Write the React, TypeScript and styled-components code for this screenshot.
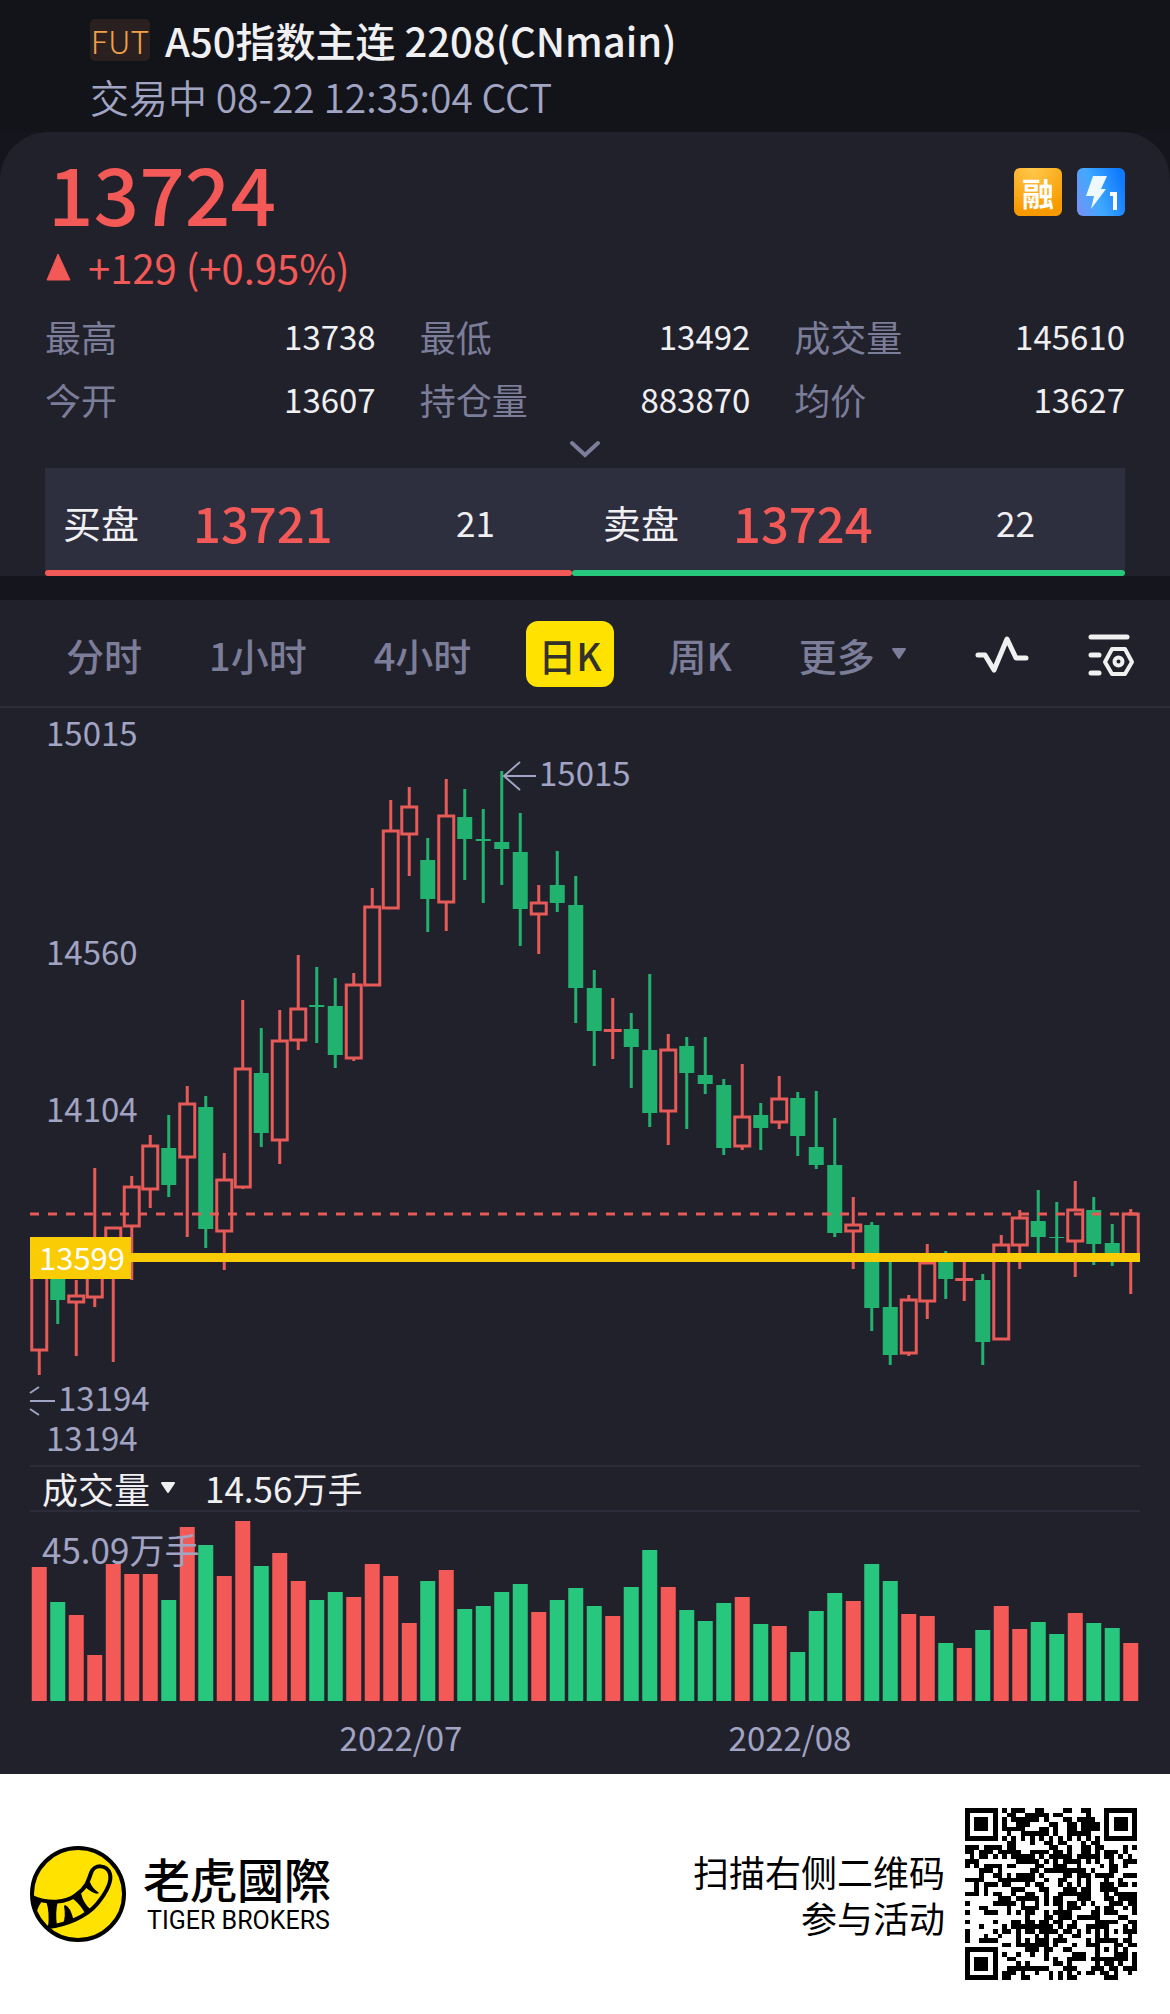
import React from "react";
import styled, { createGlobalStyle } from "styled-components";

const C = {
  page: "#15151e",
  header: "#131419",
  panel: "#21212b",
  quote: "#2d2e3e",
  line: "#2c2d3a",
  red: "#f35956",
  green: "#28c77e",
  candleRed: "#e65a58",
  candleGreen: "#20b26e",
  text: "#f0f0f2",
  muted: "#7c7d99",
  soft: "#a1a4c3",
  yellow: "#ffe200",
  marker: "#f9cc05",
};
const FONT = '"Noto Sans CJK SC", "Noto Sans", sans-serif';

const GlobalStyle = createGlobalStyle`
  * { box-sizing: border-box; }
  body { margin: 0; background: ${C.page}; font-family: ${FONT}; color: ${C.text}; }
  button, select { font: inherit; color: inherit; background: none; border: 0; padding: 0; margin: 0; cursor: pointer; }
  h1, p, dl, dt, dd { margin: 0; font-weight: inherit; }
  svg { display: block; }
`;

const Header = styled.header`
  display: flex;
  flex-direction: column;
  background: ${C.header};
  height: 132px;
  padding: 12px 90px 0;
`;
const TitleRow = styled.div`
  display: flex;
  align-items: center;
  gap: 15px;
  height: 56px;
`;
const Tag = styled.span`
  display: flex;
  align-items: center;
  justify-content: center;
  width: 60px;
  height: 42px;
  border-radius: 5px;
  background: #2a201f;
  color: #f3a04a;
  font-size: 32px;
  font-weight: 300;
`;
const Title = styled.h1`
  font-size: 40px;
  line-height: 56px;
  font-weight: 500;
  white-space: nowrap;
`;
const Status = styled.p`
  font-size: 39px;
  line-height: 56px;
  color: ${C.soft};
  font-weight: 350;
`;

const Summary = styled.section`
  background: ${C.panel};
  border-radius: 48px 48px 0 0;
  padding: 16px 45px 0;
`;
const PriceRow = styled.div`
  display: flex;
  justify-content: space-between;
  align-items: flex-start;
`;
const Price = styled.strong`
  padding-left: 3px;
  font-size: 80px;
  line-height: 86px;
  font-weight: 500;
  color: ${C.red};
`;
const Badges = styled.div`
  display: flex;
  gap: 15px;
  padding-top: 20px;
`;
const Badge = styled.span<{ $bg: string }>`
  display: flex;
  align-items: center;
  justify-content: center;
  width: 48px;
  height: 48px;
  border-radius: 6px;
  background: ${(p) => p.$bg};
  color: #fff;
  font-size: 32px;
  line-height: 44px;
  font-weight: 700;
`;
const Change = styled.p`
  display: flex;
  align-items: center;
  gap: 16px;
  height: 66px;
  font-size: 40px;
  color: ${C.red};
`;
const Stats = styled.dl`
  display: grid;
  grid-template-columns: repeat(3, 1fr);
  column-gap: 44px;
  padding-top: 4px;
`;
const Stat = styled.div`
  display: flex;
  justify-content: space-between;
  align-items: center;
  height: 63px;
  font-size: 33px;
  dt { color: ${C.muted}; font-size: 36px; }
`;
const Expand = styled.button`
  display: flex;
  align-items: center;
  justify-content: center;
  width: 100%;
  height: 38px;
`;
const Quotes = styled.div`
  display: grid;
  grid-template-columns: 1fr 1fr;
  background: ${C.quote};
`;
const Quote = styled.div`
  display: grid;
  grid-template-columns: 130px 263px 1fr;
  align-items: center;
  height: 102px;
  padding: 4px 0 0 18px;
  font-size: 38px;
`;
const QuotePrice = styled.span`
  font-size: 49px;
  font-weight: 500;
  color: ${C.red};
`;
const QuoteSize = styled.span`
  font-size: 35px;
`;
const Balance = styled.div`
  display: flex;
  height: 6px;
  background: ${C.panel};
`;
const BalancePart = styled.span<{ $grow: number; $color: string }>`
  flex: ${(p) => p.$grow} 1 0;
  background: ${(p) => p.$color};
  border-radius: 3px;
`;

const ChartPanel = styled.section`
  margin-top: 24px;
  background: ${C.panel};
`;
const Toolbar = styled.nav`
  display: flex;
  align-items: center;
  height: 108px;
  padding: 2px 35px 0 54px;
  border-bottom: 2px solid ${C.line};
`;
const Tabs = styled.div`
  display: flex;
  align-items: center;
  gap: 43px;
`;
const Tab = styled.button<{ $active?: boolean }>`
  display: flex;
  align-items: center;
  gap: 16px;
  height: 66px;
  padding: 0 12px;
  border-radius: 12px;
  font-size: 38px;
  font-weight: 500;
  white-space: nowrap;
  color: ${(p) => (p.$active ? "#33322a" : C.muted)};
  background: ${(p) => (p.$active ? C.yellow : "transparent")};
`;
const Tools = styled.div`
  display: flex;
  align-items: center;
  gap: 58px;
  margin-left: auto;
  padding-top: 2px;
`;
const Plot = styled.div`
  padding: 0 30px;
  svg { width: 100%; height: auto; overflow: visible; }
`;
const VolumeBar = styled.div`
  display: flex;
  align-items: center;
  height: 47px;
  margin: 0 30px;
  padding: 0 0 2px 12px;
  border-top: 2px solid ${C.line};
  border-bottom: 2px solid ${C.line};
  font-size: 36px;
  line-height: 42px;
`;
const IndicatorLabel = styled.label`
  display: flex;
  align-items: center;
  gap: 9px;
  margin-right: 29px;
`;
const Indicator = styled.select`
  appearance: none;
  height: 42px;
  line-height: 42px;
`;
const VolumeValue = styled.span`
  font-size: 35px;
`;

const Footer = styled.footer`
  display: flex;
  align-items: center;
  height: 240px;
  padding: 0 33px 0 30px;
  background: #fff;
  color: #000;
`;
const BrandName = styled.div`
  display: flex;
  flex-direction: column;
  margin-left: 17px;
`;
const BrandCn = styled.span`
  font-family: "Noto Sans CJK TC", sans-serif;
  font-size: 47px;
  line-height: 54px;
  font-weight: 500;
`;
const BrandEn = styled.span`
  padding-left: 4px;
  font-family: Roboto, sans-serif;
  font-size: 25px;
  line-height: 32px;
`;
const Invite = styled.p`
  margin-left: auto;
  padding-right: 20px;
  font-size: 36px;
  line-height: 46px;
  text-align: right;
`;

/* direction, body top, body bottom, wick top, wick bottom */
type Candle = ["r" | "g", number, number, number, number];
const candles: Candle[] = [
  ["r", 1262, 1351, 1262, 1375], ["g", 1265, 1300, 1262, 1324], ["r", 1295, 1303, 1280, 1356], ["r", 1250, 1298, 1168, 1307],
  ["r", 1227, 1266, 1227, 1362], ["r", 1186, 1227, 1176, 1280], ["r", 1145, 1190, 1135, 1208], ["g", 1148, 1185, 1115, 1197],
  ["r", 1103, 1158, 1086, 1237], ["g", 1107, 1229, 1096, 1248], ["r", 1179, 1232, 1153, 1270], ["r", 1068, 1188, 1000, 1189],
  ["g", 1073, 1133, 1028, 1147], ["r", 1040, 1141, 1010, 1164], ["r", 1008, 1041, 955, 1050], ["g", 1005, 1007, 967, 1043],
  ["g", 1006, 1055, 978, 1068], ["r", 984, 1059, 973, 1061], ["r", 906, 986, 888, 986], ["r", 830, 909, 800, 909],
  ["r", 806, 835, 787, 876], ["g", 860, 899, 838, 932], ["r", 815, 903, 779, 931], ["g", 817, 839, 789, 880],
  ["g", 839, 841, 809, 903], ["g", 842, 849, 771, 885], ["g", 852, 909, 813, 946], ["r", 902, 915, 885, 954],
  ["g", 885, 903, 851, 912], ["g", 905, 988, 876, 1023], ["g", 988, 1031, 970, 1066], ["r", 1029, 1032, 998, 1059],
  ["g", 1029, 1047, 1013, 1088], ["g", 1050, 1113, 974, 1127], ["r", 1049, 1112, 1034, 1145], ["g", 1046, 1073, 1037, 1129],
  ["g", 1075, 1084, 1037, 1094], ["g", 1085, 1148, 1079, 1155], ["r", 1116, 1147, 1064, 1150], ["g", 1115, 1128, 1103, 1150],
  ["r", 1098, 1123, 1076, 1129], ["g", 1098, 1136, 1092, 1156], ["g", 1147, 1165, 1091, 1169], ["g", 1165, 1233, 1118, 1237],
  ["r", 1224, 1232, 1197, 1269], ["g", 1225, 1308, 1222, 1331], ["g", 1307, 1355, 1260, 1365], ["r", 1299, 1354, 1295, 1356],
  ["r", 1262, 1302, 1244, 1319], ["g", 1262, 1279, 1251, 1299], ["r", 1278, 1281, 1260, 1301], ["g", 1280, 1342, 1274, 1365],
  ["r", 1244, 1340, 1235, 1340], ["r", 1217, 1246, 1210, 1269], ["g", 1221, 1237, 1190, 1253], ["g", 1237, 1238, 1202, 1253],
  ["r", 1209, 1242, 1181, 1277], ["g", 1210, 1244, 1197, 1265], ["g", 1243, 1256, 1224, 1266], ["r", 1213, 1258, 1209, 1294],
];
const volumes = [
  134, 99, 86, 46, 137, 127, 127, 101, 174, 156, 125, 180, 135, 148, 120, 101, 109, 104, 137, 125,
  78, 120, 131, 92, 95, 109, 117, 89, 101, 113, 95, 85, 114, 151, 114, 91, 80, 98, 104, 77,
  75, 49, 90, 108, 100, 137, 120, 87, 85, 58, 53, 71, 95, 72, 79, 67, 88, 78, 73, 58,
];
const STEP = 18.5;
const centre = (i: number) => 9.25 + STEP * i;

const axis: [string, number][] = [["15015", 734], ["14560", 953], ["14104", 1110], ["13194", 1439]];

function CandleChart() {
  return (
    <svg viewBox="0 708 1110 757" role="img" aria-label="日K">
      {candles.map(([kind, top, bottom, high, low], i) => {
        const x = centre(i);
        if (kind === "g") {
          return (
            <g key={i} fill={C.candleGreen}>
              <rect x={x - 1.5} y={high} width="3" height={low - high} />
              <rect x={x - 7.5} y={top} width="15" height={bottom - top} />
            </g>
          );
        }
        return (
          <g key={i} fill={C.candleRed}>
            <rect x={x - 1.5} y={high} width="3" height={Math.max(0, top - high)} />
            <rect x={x - 1.5} y={bottom} width="3" height={Math.max(0, low - bottom)} />
            {bottom - top < 5 ? (
              <rect x={x - 9} y={top} width="18" height={bottom - top} />
            ) : (
              <rect x={x - 7.5} y={top + 1} width="15" height={bottom - top - 2} fill="none" stroke={C.candleRed} strokeWidth="3" />
            )}
          </g>
        );
      })}
      <line x1="0" x2="1110" y1="1214" y2="1214" stroke={C.candleRed} strokeWidth="3" strokeDasharray="9 9" />
      <rect x="100" y="1253" width="1010" height="9" fill={C.marker} />
      <rect x="0" y="1237" width="101" height="42" fill={C.marker} />
      <g fontFamily={FONT} fontSize="33" fill={C.soft}>
        {axis.map(([label, y]) => (
          <text key={label} x="16" y={y + 12}>{label}</text>
        ))}
        <text x="9" y="1270" fill="#fff" fontSize="31">13599</text>
        <text x="509" y="786">15015</text>
        <text x="28" y="1411">13194</text>
      </g>
      <g fill="none" stroke={C.soft} strokeWidth="2">
        <path d="M506 776H474M490 762L474 776L490 790" />
        <path d="M25 1401H0M9 1387L0 1393M0 1409L9 1415" />
      </g>
    </svg>
  );
}

function VolumeChart() {
  return (
    <svg viewBox="0 0 1110 262" role="img" aria-label="成交量">
      {volumes.map((v, i) => (
        <rect key={i} x={centre(i) - 7.5} y={189 - v} width="15" height={v} fill={candles[i][0] === "r" ? C.red : C.green} />
      ))}
      <g fontFamily={FONT} fontSize="33" fill={C.soft}>
        <text x="12" y="52" fontSize="35">45.09万手</text>
        <text x="371" y="239" textAnchor="middle">2022/07</text>
        <text x="760" y="239" textAnchor="middle">2022/08</text>
      </g>
    </svg>
  );
}

function TigerLogo() {
  return (
    <svg width="96" height="96" viewBox="0 0 96 96" aria-hidden="true">
      <circle cx="48" cy="48" r="46" fill={C.yellow} stroke="#000" strokeWidth="4" />
      <path d="M2 51C18 58 36 57 46 49C56 42 58 36 61 27C64 18 77 18 80 28C82 36 76 47 67 58C56 71 36 79 18 81" fill="none" stroke="#000" strokeWidth="4" />
      <path d="M2 50L13 54Q9 58 6 68L2 60ZM16 55H28Q25 66 27 80L18 82Q20 66 16 55ZM35 59Q40 60 44 75L33 78Q36 70 34 60ZM42 52L51 47Q53 57 61 64L56 69Q51 59 42 52ZM55 39L60 36Q62 42 69 47Q66 50 55 41Z" fill="#000" />
    </svg>
  );
}

const QR_SIZE = 37;
function isDark(r: number, c: number) {
  const finder = (r0: number, c0: number) => {
    const d = Math.max(Math.abs(r - r0 - 3), Math.abs(c - c0 - 3));
    return d <= 4 ? d === 3 || d <= 1 : null;
  };
  for (const [a, b] of [[0, 0], [0, 30], [30, 0]]) {
    const f = finder(a, b);
    if (f !== null) return f;
  }
  const d = Math.max(Math.abs(r - 30), Math.abs(c - 30));
  if (d <= 2) return d !== 1;
  if (r === 6) return c % 2 === 0;
  if (c === 6) return r % 2 === 0;
  let h = (r * 374761393 + c * 668265263) | 0;
  h = Math.imul(h ^ (h >>> 13), 1274126177);
  h = (h ^ (h >>> 16)) >>> 0;
  return h % 100 < (r > 18 && r < 28 && c < 11 ? 30 : 52);
}
function QrCode() {
  let d = "";
  for (let r = 0; r < QR_SIZE; r++)
    for (let c = 0; c < QR_SIZE; c++) if (isDark(r, c)) d += `M${c} ${r}h1v1h-1z`;
  return (
    <svg width="172" height="172" viewBox="0 0 37 37" shapeRendering="crispEdges" role="img" aria-label="二维码">
      <path d={d} fill="#000" />
    </svg>
  );
}

const stats = [
  ["最高", "13738"], ["最低", "13492"], ["成交量", "145610"],
  ["今开", "13607"], ["持仓量", "883870"], ["均价", "13627"],
];

const Down = ({ color }: { color: string }) => (
  <svg width="16" height="12" viewBox="0 0 16 12" aria-hidden="true">
    <path d="M2 1H14L8 10Z" fill={color} stroke={color} strokeWidth="2" strokeLinejoin="round" />
  </svg>
);

export default function App() {
  return (
    <>
      <GlobalStyle />
      <Header>
        <TitleRow>
          <Tag>FUT</Tag>
          <Title>A50指数主连 2208(CNmain)</Title>
        </TitleRow>
        <Status>交易中 08-22 12:35:04 CCT</Status>
      </Header>
      <main>
        <Summary>
          <PriceRow>
            <Price>13724</Price>
            <Badges>
              <Badge $bg="radial-gradient(circle at 40% 0%, #ffc94d, #f79a00 80%)">融</Badge>
              <Badge $bg="linear-gradient(70deg, #7b8ff5 0%, #3fa9ff 40%, #0f79ff 90%)">
                <svg width="48" height="48" viewBox="0 0 48 48" role="img" aria-label="L1">
                  <path d="M16 8H30L24 21H29L14 41L17 28H9Z" fill="#eef8ff" />
                  <path d="M33 26H38V42" fill="none" stroke="#fff" strokeWidth="4" />
                </svg>
              </Badge>
            </Badges>
          </PriceRow>
          <Change>
            <svg width="27" height="28" viewBox="0 0 27 28" aria-hidden="true">
              <path d="M13 1L25 27H2Z" fill={C.red} stroke={C.red} strokeLinejoin="round" />
            </svg>
            +129 (+0.95%)
          </Change>
          <Stats>
            {stats.map(([k, v]) => (
              <Stat key={k}><dt>{k}</dt><dd>{v}</dd></Stat>
            ))}
          </Stats>
          <Expand aria-label="展开">
            <svg width="30" height="18" viewBox="0 0 30 18" fill="none" stroke={C.muted} strokeWidth="4" strokeLinecap="round">
              <path d="M2 3L15 15L28 3" />
            </svg>
          </Expand>
          <Quotes>
            <Quote><span>买盘</span><QuotePrice>13721</QuotePrice><QuoteSize>21</QuoteSize></Quote>
            <Quote><span>卖盘</span><QuotePrice>13724</QuotePrice><QuoteSize>22</QuoteSize></Quote>
          </Quotes>
          <Balance>
            <BalancePart $grow={21} $color={C.red} />
            <BalancePart $grow={22} $color={C.green} />
          </Balance>
        </Summary>

        <ChartPanel>
          <Toolbar>
            <Tabs>
              <Tab>分时</Tab>
              <Tab>1小时</Tab>
              <Tab>4小时</Tab>
              <Tab $active aria-pressed="true">日K</Tab>
              <Tab>周K</Tab>
              <Tab aria-haspopup="menu">更多<Down color={C.muted} /></Tab>
            </Tabs>
            <Tools>
              <button aria-label="指标">
                <svg width="54" height="40" viewBox="0 0 54 40" fill="none" stroke="#f0f0f0" strokeWidth="5" strokeLinecap="round" strokeLinejoin="round">
                  <path d="M3 20H10L19 35L32 4L41 23H51" />
                </svg>
              </button>
              <button aria-label="设置">
                <svg width="48" height="44" viewBox="0 0 48 44" fill="none" stroke="#f0f0f0" strokeWidth="4" strokeLinecap="round" strokeLinejoin="round">
                  <path d="M4 4H40M4 22H12M4 40H12" strokeWidth="5" />
                  <path d="M25 16H38L45 29L38 41H25L18 29Z" />
                  <circle cx="31.5" cy="28.5" r="4" />
                </svg>
              </button>
            </Tools>
          </Toolbar>
          <Plot><CandleChart /></Plot>
          <VolumeBar>
            <IndicatorLabel>
              <Indicator aria-label="副图指标" defaultValue="vol">
                <option value="vol">成交量</option>
              </Indicator>
              <Down color={C.text} />
            </IndicatorLabel>
            <VolumeValue>14.56万手</VolumeValue>
          </VolumeBar>
          <Plot><VolumeChart /></Plot>
        </ChartPanel>
      </main>
      <Footer>
        <TigerLogo />
        <BrandName>
          <BrandCn>老虎國際</BrandCn>
          <BrandEn>TIGER BROKERS</BrandEn>
        </BrandName>
        <Invite>扫描右侧二维码<br />参与活动</Invite>
        <QrCode />
      </Footer>
    </>
  );
}
